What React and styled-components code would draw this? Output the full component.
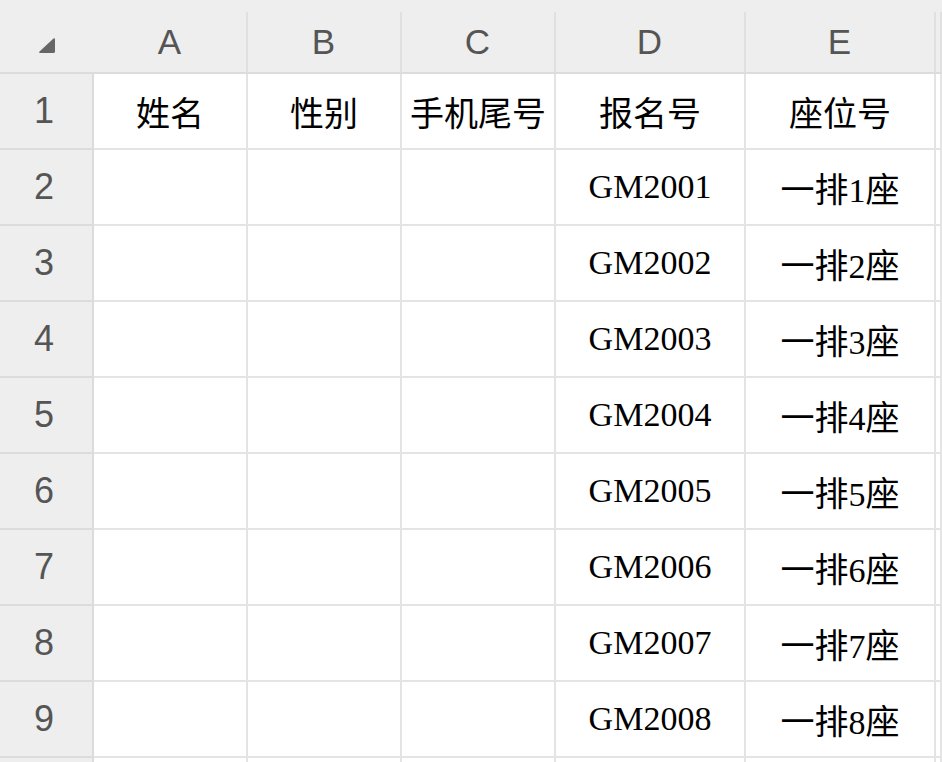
import React from "react";
import styled, { createGlobalStyle } from "styled-components";

const GlobalStyle = createGlobalStyle`
  html, body {
    margin: 0;
    padding: 0;
    background: #fff;
    overflow: hidden;
  }
`;

const columns = ["A", "B", "C", "D", "E", ""];

const rows = [
  ["姓名", "性别", "手机尾号", "报名号", "座位号"],
  ...[1, 2, 3, 4, 5, 6, 7, 8].map((n) => ["", "", "", `GM200${n}`, `一排${n}座`]),
];

const Sheet = styled.div`
  display: grid;
  grid-template-columns: 94px 154px 154px 154px 190px 190px 1fr;
  grid-template-rows: 74px repeat(10, 76px);
  width: 942px;
  height: 762px;
  overflow: hidden;
`;

const Corner = styled.div`
  background: #eeeeee;
  border-bottom: 2px solid #dcdcdc;
  display: flex;
  align-items: flex-start;
  padding: 37px 0 0 38px;
  box-sizing: border-box;
`;

const ColHead = styled.div`
  box-sizing: border-box;
  background: linear-gradient(#e0e0e0, #e0e0e0) right bottom / 2px 60px no-repeat, #eeeeee;
  border-bottom: 2px solid #dcdcdc;
  display: flex;
  align-items: center;
  justify-content: center;
  padding: 12px 3px 0 0;
  font-family: "Liberation Sans", Arial, sans-serif;
  font-size: 35px;
  color: #555;
`;

const RowHead = styled.div`
  box-sizing: border-box;
  background: #eeeeee;
  border-right: 2px solid #dcdcdc;
  border-bottom: 2px solid #dcdcdc;
  display: flex;
  align-items: center;
  justify-content: center;
  padding-right: 4px;
  font-family: "Liberation Sans", Arial, sans-serif;
  font-size: 36px;
  color: #555;
`;

const Cell = styled.div`
  box-sizing: border-box;
  background: #fff;
  border-right: 2px solid #e4e4e4;
  border-bottom: 2px solid #e4e4e4;
  display: flex;
  align-items: center;
  justify-content: center;
  white-space: nowrap;
  font-family: "Liberation Serif", "Noto Sans CJK SC", serif;
  font-size: 34px;
  color: #000;
`;

function SelectAll() {
  return (
    <svg width="18" height="17" viewBox="0 0 18 17">
      <path
        d="M15.5 1.5 Q17 0.5 17 2.5 V14.5 Q17 16 15.5 16 H2.5 Q0.5 16 1.5 14.5 Z"
        fill="#666"
      />
    </svg>
  );
}

export default function App() {
  return (
    <>
      <GlobalStyle />
      <Sheet>
        <Corner>
          <SelectAll />
        </Corner>
        {columns.map((c, i) => (
          <ColHead key={i}>{c}</ColHead>
        ))}
        {rows.map((row, r) => (
          <React.Fragment key={r}>
            <RowHead>{r + 1}</RowHead>
            {row.map((v, c) => (
              <Cell key={c}>{v}</Cell>
            ))}
            <Cell />
          </React.Fragment>
        ))}
        {/* next row, mostly off screen */}
        <RowHead />
        {columns.map((c, i) => (
          <Cell key={i} />
        ))}
      </Sheet>
    </>
  );
}
